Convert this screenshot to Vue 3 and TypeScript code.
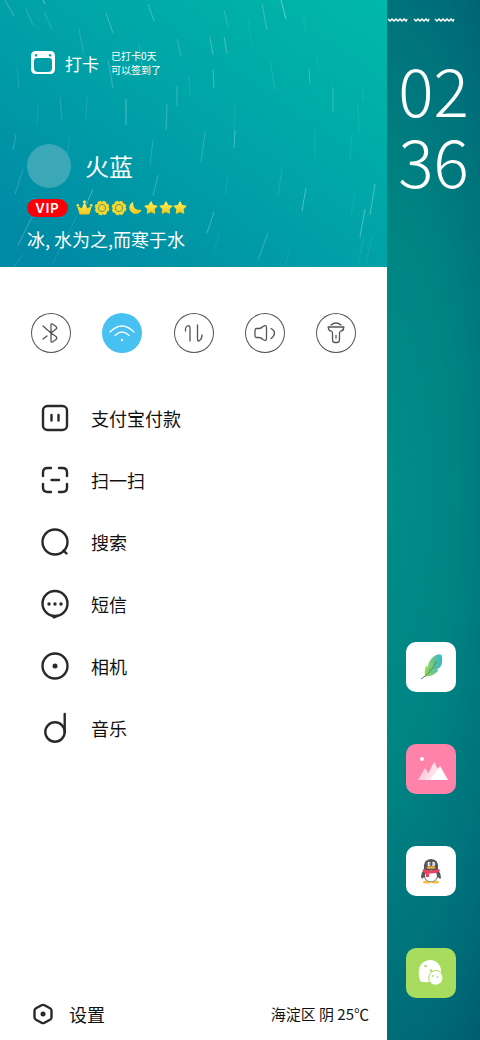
<script setup lang="ts">
type Drop = [number, number, number, number, number]

const drops: Drop[] = [
  [5, 0, 14, 16, 0.35], [26, 9, 33, 25, 0.25], [43, 0, 45, 4, 0.5], [44, 12, 52, 29, 0.2],
  [106, 13, 113, 33, 0.35], [148, 4, 154, 21, 0.35], [79, 29, 84, 55, 0.2], [108, 60, 113, 88, 0.3],
  [139, 44, 142, 66, 0.2], [177, 39, 181, 56, 0.25], [17, 67, 19, 88, 0.15], [60, 98, 62, 120, 0.2],
  [87, 96, 86, 120, 0.15], [126, 99, 126, 125, 0.4], [167, 104, 166, 130, 0.3], [177, 86, 177, 106, 0.3],
  [189, 76, 190, 96, 0.15], [38, 104, 37, 124, 0.12], [16, 134, 13, 150, 0.25], [70, 136, 66, 162, 0.15],
  [153, 140, 150, 165, 0.2], [23, 169, 15, 194, 0.25], [93, 189, 84, 210, 0.4], [158, 175, 153, 196, 0.3],
  [32, 217, 18, 245, 0.35], [77, 215, 67, 236, 0.15], [23, 255, 14, 266, 0.2], [66, 238, 53, 263, 0.15],
  [281, 0, 286, 19, 0.5], [262, 4, 267, 30, 0.3], [224, 10, 228, 27, 0.25], [210, 37, 213, 55, 0.35],
  [224, 37, 227, 53, 0.35], [249, 20, 251, 44, 0.1], [303, 14, 306, 32, 0.1], [213, 70, 214, 88, 0.35],
  [270, 60, 275, 91, 0.15], [309, 68, 310, 83, 0.3], [317, 52, 318, 69, 0.1], [333, 87, 333, 112, 0.3],
  [362, 84, 363, 101, 0.1], [358, 103, 359, 134, 0.12], [235, 100, 234, 130, 0.1], [235, 130, 234, 148, 0.35],
  [205, 132, 201, 163, 0.25], [315, 129, 315, 160, 0.12], [352, 136, 350, 160, 0.12], [282, 168, 278, 196, 0.15],
  [228, 175, 225, 195, 0.12], [306, 188, 302, 211, 0.4], [375, 184, 370, 215, 0.4], [365, 209, 360, 237, 0.4],
  [214, 212, 207, 233, 0.35], [268, 233, 258, 260, 0.3], [219, 233, 213, 257, 0.1], [355, 192, 351, 217, 0.1],
  [364, 236, 358, 263, 0.12], [372, 236, 366, 263, 0.12], [289, 251, 285, 266, 0.1],
]

const toggles = [
  { id: 'bluetooth', label: '蓝牙', on: false },
  { id: 'wifi', label: 'WLAN', on: true },
  { id: 'data', label: '移动数据', on: false },
  { id: 'sound', label: '声音', on: false },
  { id: 'torch', label: '手电筒', on: false },
]

const entries = [
  { id: 'pay', label: '支付宝付款' },
  { id: 'scan', label: '扫一扫' },
  { id: 'search', label: '搜索' },
  { id: 'sms', label: '短信' },
  { id: 'camera', label: '相机' },
  { id: 'music', label: '音乐' },
]
</script>

<template>
  <div class="screen">
    <main class="drawer">
      <header class="hero">
        <svg class="rain" viewBox="0 0 387 267" preserveAspectRatio="none" aria-hidden="true">
          <line
            v-for="(d, i) in drops"
            :key="i"
            :x1="d[0]"
            :y1="d[1]"
            :x2="d[2]"
            :y2="d[3]"
            :stroke-opacity="d[4]"
          />
        </svg>
        <button class="checkin" type="button">
          <svg width="24" height="24" viewBox="0 0 24 24" aria-hidden="true">
            <path
              fill="#fff"
              fill-rule="evenodd"
              d="M5 0H19Q24 0 24 5V18Q24 23 19 23H5Q0 23 0 18V5Q0 0 5 0ZM6 7Q3 7 3 10V17Q3 21 7 21H17Q21 21 21 17V10Q21 7 18 7ZM5 3a1.3 1.3 0 1 0 .1 0ZM19 3a1.3 1.3 0 1 0 .1 0Z"
            />
          </svg>
          <span class="checkin-title">打卡</span>
          <span class="checkin-note">已打卡0天<br />可以签到了</span>
        </button>
        <div class="profile">
          <div class="avatar"></div>
          <h1 class="name">火蓝</h1>
        </div>
        <div class="level">
          <span class="vip">VIP</span>
          <svg width="112" height="16" viewBox="0 0 112 16" aria-hidden="true">
            <defs>
              <linearGradient id="gold" x1="0" y1="0" x2="0" y2="1">
                <stop offset="0" stop-color="#fff25a" />
                <stop offset="1" stop-color="#f2c51c" />
              </linearGradient>
              <path
                id="star"
                d="M0-6.3 2-2.6 6.2-1.9 3.2 1.2 3.8 5.4 0 3.6-3.8 5.4-3.2 1.2-6.2-1.9-2-2.6Z"
              />
            </defs>
            <g fill="url(#gold)" stroke="url(#gold)" stroke-linejoin="round">
              <path d="M4 14 2 7 6 9 8.500 3 11 9 15 7 13 14Z" />
              <circle cx="8.500" cy="2" r="1.200" />
              <circle cx="1.800" cy="5.500" r="1" />
              <circle cx="15.200" cy="5.500" r="1" />
              <g v-for="x in [26, 43]" :key="x">
                <circle :cx="x" cy="8" r="6.5" fill="#f5d82e" stroke="none" />
                <circle
                  :cx="x"
                  cy="8"
                  r="6.5"
                  fill="none"
                  stroke="#f5d82e"
                  stroke-width="1.8"
                  stroke-dasharray="3.3 1.8"
                />
                <circle :cx="x" cy="8" r="3.6" fill="none" stroke="#5b9b72" />
              </g>
              <path d="M56.500 2.500A6 6 0 1 0 65 10.500Q56.500 11 56.500 2.500Z" />
              <use href="#star" x="75" y="8" />
              <use href="#star" x="90" y="8" />
              <use href="#star" x="104" y="8" />
            </g>
          </svg>
        </div>
        <p class="motto">冰, 水为之,而寒于水</p>
      </header>

      <section class="toggles">
        <button
          v-for="t in toggles"
          :key="t.id"
          type="button"
          class="toggle"
          :class="{ on: t.on }"
          :aria-label="t.label"
          :aria-pressed="t.on"
        >
          <svg width="40" height="40" viewBox="0 0 40 40" aria-hidden="true">
            <template v-if="t.id === 'bluetooth'">
              <path d="M12 13 20 20M12 26 16 23M20 20V11.500Q20 10.500 21.500 11L25 13.500Q26.500 15 25 16L20 20 25 23.500Q26.500 25 25 26.500L21.500 29Q20 29.500 20 28Z" />
            </template>
            <template v-else-if="t.id === 'wifi'">
              <path d="M8 19Q20 7 32 19M13 22.500Q20 15.500 27 22.500" />
              <circle cx="20" cy="27" r="1.200" class="dot" />
            </template>
            <template v-else-if="t.id === 'data'">
              <path d="M11.500 18Q11 14 13.500 13Q16 12 16 15V28M23.500 12V26Q23.500 29 25.500 27.500Q28 26 28 22" />
            </template>
            <template v-else-if="t.id === 'sound'">
              <path d="M11.500 15.500H14Q16 15.500 18 13.500Q21.500 11 21.500 15V25Q21.500 29 18 26.500Q16 24.500 14 24.500H11.500Q10 24.500 10 23V17Q10 15.500 11.500 15.500M26 15.500Q29.500 17 29.500 20T26 25.500" />
            </template>
            <template v-else>
              <path d="M12 14H28M15 12Q20 8 25 12M12.500 14.500Q12 17.500 15 18Q16.500 18.500 16.500 20V26.500Q16.500 29.500 19 29.500H21Q23.500 29.500 23.500 26.500V20Q23.500 18.500 25 18Q28 17.500 27.500 14.500M20 22.500V25" />
            </template>
          </svg>
        </button>
      </section>

      <nav class="menu">
        <a v-for="e in entries" :key="e.id" href="#" class="entry">
          <svg width="32" height="32" viewBox="0 0 32 32" aria-hidden="true">
            <template v-if="e.id === 'pay'">
              <rect x="4" y="4" width="24" height="24" rx="4.500" />
              <path d="M12.500 13V18.500M19.500 13V18.500" />
            </template>
            <path
              v-else-if="e.id === 'scan'"
              d="M4 12V8.500Q4 4 8.500 4H12M20 4H23.500Q28 4 28 8.500V12M28 20V23.500Q28 28 23.500 28H20M12 28H8.500Q4 28 4 23.500V20M12.500 16H20"
            />
            <template v-else-if="e.id === 'search'">
              <circle cx="16" cy="16" r="12.500" />
              <path d="M24.500 24.500 27.500 27.500" />
            </template>
            <template v-else-if="e.id === 'sms'">
              <circle cx="16" cy="15.500" r="12.500" />
              <path d="M13.500 28 15 29.500 18.500 28" />
              <g class="dot">
                <circle cx="10" cy="16" r="1.700" />
                <circle cx="16" cy="16" r="1.700" />
                <circle cx="22" cy="16" r="1.700" />
              </g>
            </template>
            <template v-else-if="e.id === 'camera'">
              <circle cx="16" cy="16" r="12.500" />
              <circle cx="16" cy="16" r="2.500" class="dot" />
            </template>
            <template v-else>
              <circle cx="16" cy="20" r="9.700" />
              <path d="M25.700 20V2" />
            </template>
          </svg>
          <span>{{ e.label }}</span>
        </a>
      </nav>

      <footer class="bottom">
        <a href="#" class="settings">
          <svg width="22" height="22" viewBox="0 0 22 22" aria-hidden="true">
            <path d="M9.500 2.300Q11 1.500 12.500 2.300L18 5.200Q19.500 6 19.500 7.800V14.200Q19.500 16 18 16.800L12.500 19.700Q11 20.500 9.500 19.700L4 16.800Q2.500 16 2.500 14.200V7.800Q2.500 6 4 5.200Z" />
            <circle cx="11" cy="11" r="2.500" class="dot" />
          </svg>
          <span>设置</span>
        </a>
        <span class="weather">海淀区 阴 25℃</span>
      </footer>
    </main>

    <aside class="home">
      <svg class="waves" width="68" height="6" viewBox="0 0 68 6" aria-hidden="true">
        <path d="M1 2l2 2 2-2 2 2 2-2 2 2 2-2 2 2 2-2 2 2 1-2M27 2l2 2 2-2 2 2 2-2 2 2 2-2 2 2 1-2M48 2l2 2 2-2 2 2 2-2 2 2 2-2 2 2 2-2 2 2 1-2" />
      </svg>
      <time class="clock" datetime="02:36">02<br />36</time>
      <div class="apps">
        <button type="button" class="app" aria-label="羽毛">
          <svg width="50" height="50" viewBox="0 0 50 50" aria-hidden="true">
            <defs>
              <linearGradient id="feather" x1="0" y1="0" x2="1" y2="0">
                <stop offset="0" stop-color="#9ddb48" />
                <stop offset="0.450" stop-color="#6cc98a" />
                <stop offset="1" stop-color="#35b6d4" />
              </linearGradient>
            </defs>
            <path fill="url(#feather)" d="M19 34.500Q18 29 20.500 23L22 26Q22 19 27 15Q32 11 35.500 13Q37.500 20 34 25.500L31.500 27 32 29Q27 34.500 19 34.500Z" />
            <path fill="none" stroke="#59805e" stroke-width="1" d="M15 37Q25 31 31 19" />
            <path fill="none" stroke="#4fae8c" stroke-width="0.600" d="M24 30.500 23 25M27 27 33 24M28 25 28 18" />
          </svg>
        </button>
        <button type="button" class="app pink" aria-label="相册">
          <svg width="50" height="50" viewBox="0 0 50 50" aria-hidden="true">
            <circle cx="16" cy="15" r="2" fill="#fff" />
            <path fill="#ffd0e0" d="M12 36 19 24 27 36Z" />
            <path fill="#ffe0ea" d="M19 36 28 18 38 36Z" />
            <path fill="#fff" d="M24 36 34 22 42 36Z" />
          </svg>
        </button>
        <button type="button" class="app" aria-label="QQ">
          <svg width="50" height="50" viewBox="0 0 50 50" aria-hidden="true">
            <ellipse cx="21" cy="36" rx="4" ry="1.500" fill="#f7bd45" />
            <ellipse cx="29" cy="36" rx="4" ry="1.500" fill="#f7bd45" />
            <path fill="#56575c" d="M18 23Q17 13 25 13T32 23Q35 28 35 32Q34 34 32 31Q30 36 25 36T18 31Q16 34 15 31Q15 27 18 23Z" />
            <ellipse cx="25" cy="30" rx="6" ry="5.500" fill="#fff" />
            <ellipse cx="23" cy="18" rx="1.500" ry="2.200" fill="#fff" />
            <ellipse cx="27.500" cy="18" rx="1.500" ry="2.200" fill="#fff" />
            <circle cx="23.500" cy="18" r="0.700" fill="#444" />
            <circle cx="27" cy="18" r="0.700" fill="#444" />
            <ellipse cx="25" cy="21.500" rx="4.500" ry="1.300" fill="#f7ad3b" />
            <path fill="#f0405f" d="M17 23Q25 26 33 23L34 25Q30 28 23 27.500V31H20V27Q16 26 17 23Z" />
          </svg>
        </button>
        <button type="button" class="app green" aria-label="微信">
          <svg width="50" height="50" viewBox="0 0 50 50" aria-hidden="true">
            <path fill="#fff" d="M14.500 33.500Q12 27 13 22A11 11 0 0 1 35 24V34H22Q18 34.500 14.500 33.500Z" />
            <path
              fill="#fff"
              stroke="#a8dc5e"
              d="M30 22.500A7.300 7.300 0 1 1 24.500 35Q22.500 32 22.700 30A7.300 7.300 0 0 1 30 22.500Z"
            />
            <g fill="#a8dc5e">
              <circle cx="19.500" cy="18" r="1.300" />
              <circle cx="25" cy="22.500" r="1.300" />
              <circle cx="27" cy="28" r="0.900" />
              <circle cx="31.500" cy="29" r="0.900" />
            </g>
          </svg>
        </button>
      </div>
    </aside>
  </div>
</template>

<style>
body {
  margin: 0;
}
</style>

<style scoped>
.screen {
  display: flex;
  min-height: 100vh;
  font-family: "Noto Sans CJK SC", sans-serif;
  color: #111;
  background: #fff;
}
button {
  padding: 0;
  border: 0;
  background: none;
  font: inherit;
  color: inherit;
}
a {
  color: inherit;
  text-decoration: none;
}
svg {
  display: block;
  flex: none;
}
.drawer {
  flex: 1;
  display: flex;
  flex-direction: column;
}
.hero {
  position: relative;
  box-sizing: border-box;
  min-height: 267px;
  padding: 44px 27px 0;
  color: #fff;
  background: linear-gradient(35deg, #008aa5 8%, #00a3a8 52%, #00b9a9 100%);
}
.rain {
  position: absolute;
  inset: 0;
  width: 100%;
  height: 100%;
  opacity: 0.75;
  stroke: #fff;
  stroke-width: 1;
}
.checkin,
.profile,
.level,
.motto {
  position: relative;
}
.checkin {
  display: flex;
  align-items: center;
  height: 38px;
  padding-left: 4px;
}
.checkin-title {
  margin: 0 12px 0 10px;
  font-size: 17px;
}
.checkin-note {
  font-size: 10px;
  line-height: 14px;
  text-align: left;
}
.profile {
  display: flex;
  align-items: center;
  gap: 14px;
  margin-top: 62px;
}
.avatar {
  width: 44px;
  height: 44px;
  border-radius: 50%;
  background: #3ca8b7;
}
.name {
  margin: 0;
  font-size: 24px;
  font-weight: 400;
  line-height: 32px;
}
.level {
  display: flex;
  align-items: center;
  gap: 8px;
  margin-top: 11px;
}
.vip {
  width: 41px;
  border-radius: 9px;
  background: #fb0007;
  font: 600 13px/18px Inter, sans-serif;
  letter-spacing: 1px;
  text-align: center;
}
.motto {
  margin: 10px 0 0;
  font-size: 18px;
  line-height: 24px;
}
.toggles {
  display: flex;
  justify-content: space-between;
  padding: 46px 31px 0;
}
.toggle svg {
  fill: none;
  stroke: #555;
  stroke-width: 1.3;
  stroke-linecap: round;
  stroke-linejoin: round;
}
.toggle {
  box-sizing: border-box;
  width: 40px;
  height: 40px;
  border-radius: 50%;
  box-shadow: inset 0 0 0 1px #555;
}
.toggle.on {
  background: #46c1f2;
  box-shadow: none;
}
.toggle.on svg {
  stroke: #fff;
}
.toggle .dot {
  fill: #fff;
  stroke: none;
}
.menu {
  padding: 34px 39px 0;
}
.entry {
  display: flex;
  align-items: center;
  gap: 20px;
  height: 62px;
  font-size: 18px;
}
.entry svg,
.settings svg {
  fill: none;
  stroke: #292929;
  stroke-width: 2.4;
  stroke-linecap: round;
  stroke-linejoin: round;
}
.entry .dot,
.settings .dot {
  fill: #292929;
  stroke: none;
}
.bottom {
  display: flex;
  align-items: center;
  justify-content: space-between;
  margin-top: auto;
  padding: 0 18px 12px 32px;
  line-height: 28px;
}
.settings {
  display: flex;
  align-items: center;
  gap: 15px;
  font-size: 18px;
}
.weather {
  font-size: 15px;
}
.home {
  display: flex;
  flex-direction: column;
  flex: none;
  box-sizing: border-box;
  width: 93px;
  padding: 17px 0 42px;
  background: radial-gradient(ellipse 190px 760px at 0 47%, #008d8a 0%, #008583 35%, #006c78 72%, #004e67 100%);
}
.waves {
  fill: none;
  stroke: #fff;
  stroke-width: 1.5;
}
.clock {
  margin-top: 30px;
  color: #fff;
  font-size: 66px;
  font-weight: 200;
  line-height: 71px;
  text-align: center;
}
.apps {
  display: grid;
  gap: 52px;
  margin-top: auto;
  padding-left: 19px;
}
.app {
  width: 50px;
  height: 50px;
  border-radius: 10px;
  background: #fff;
}
.app.pink {
  background: #ff82ab;
}
.app.green {
  background: #a8dc5e;
}
</style>
